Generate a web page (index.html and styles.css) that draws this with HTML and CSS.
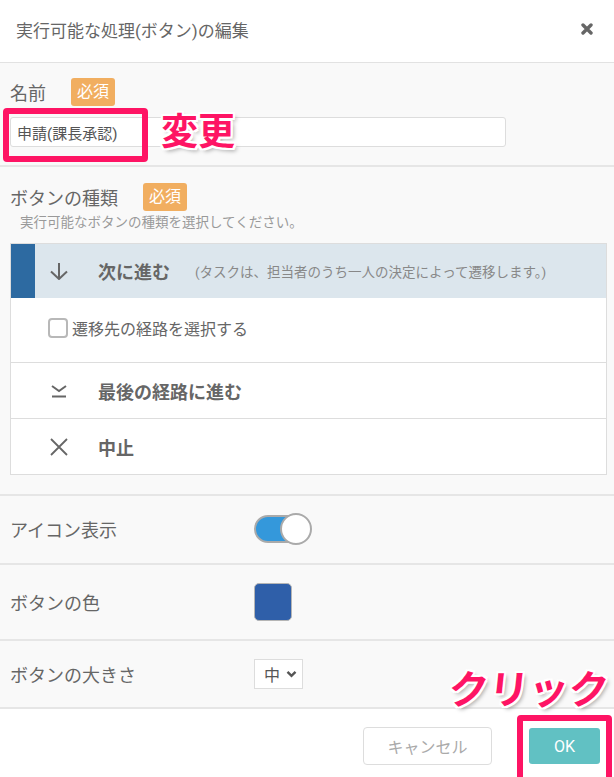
FILE: index.html
```html
<!DOCTYPE html>
<html lang="ja">
<head>
    <meta charset="utf-8" />
    <title>実行可能な処理(ボタン)の編集</title>
    <meta name="viewport" content="width=device-width, initial-scale=1" />
    <link rel="stylesheet" href="styles.css">
</head>
<body>
<div class="modal">
    <div class="modal-header">
        <h1 class="modal-title">実行可能な処理(ボタン)の編集</h1>
        <svg class="close" width="12" height="12" viewBox="0 0 12 12">
            <path d="M2 2L10 10M10 2L2 10" stroke="#666" stroke-width="3.4" stroke-linecap="round" />
        </svg>
    </div>

    <div class="modal-body">
        <div class="section name-section">
            <div class="field-label">名前<span class="badge">必須</span></div>
            <div class="input-wrap">
                <input type="text" class="text-input" value="申請(課長承認)" />
                <span class="mark mark-input"></span>
                <span class="note note-change">変更</span>
            </div>
        </div>

        <div class="section type-section">
            <div class="field-label">ボタンの種類<span class="badge">必須</span></div>
            <div class="help">実行可能なボタンの種類を選択してください。</div>

            <div class="type-list">
                <div class="type-item selected">
                    <svg class="type-icon" width="22" height="18" viewBox="0 0 22 18">
                        <path d="M11 1V17M3 9.5L11 17L19 9.5" fill="none" stroke="#666" stroke-width="2" />
                    </svg>
                    <span class="type-name">次に進む</span>
                    <span class="type-desc">(タスクは、担当者のうち一人の決定によって遷移します。)</span>
                </div>
                <div class="route-option">
                    <span class="checkbox"></span>
                    <span>遷移先の経路を選択する</span>
                </div>
                <div class="type-item">
                    <svg class="type-icon" width="22" height="14" viewBox="0 0 22 14">
                        <path d="M4 2L11 7L18 2M4 12.5H18" fill="none" stroke="#666" stroke-width="2" />
                    </svg>
                    <span class="type-name">最後の経路に進む</span>
                </div>
                <div class="type-item">
                    <svg class="type-icon" width="22" height="18" viewBox="0 0 22 18">
                        <path d="M3 1L19 17M19 1L3 17" fill="none" stroke="#666" stroke-width="1.8" />
                    </svg>
                    <span class="type-name">中止</span>
                </div>
            </div>
        </div>

        <div class="option-row">
            <div class="option-label">アイコン表示</div>
            <div class="toggle"><span class="knob"></span></div>
        </div>
        <div class="option-row">
            <div class="option-label">ボタンの色</div>
            <div class="swatch"></div>
        </div>
        <div class="option-row">
            <div class="option-label">ボタンの大きさ</div>
            <div class="select">中
                <svg width="11" height="8" viewBox="0 0 11 8">
                    <path d="M1.5 1.8L5.5 5.8L9.5 1.8" fill="none" stroke="#555" stroke-width="2.4" />
                </svg>
            </div>
        </div>
    </div>

    <div class="modal-footer">
        <button class="btn btn-cancel">キャンセル</button>
        <div class="ok-wrap">
            <button class="btn btn-ok">OK</button>
            <span class="mark mark-ok"></span>
            <span class="note note-click">クリック</span>
        </div>
    </div>
</div>
</body>
</html>
```

FILE: styles.css
```css
body {
    margin: 0; padding: 0;
    font-family: "Roboto", "Noto Sans CJK JP", sans-serif;
    color: #666; background-color: #fff;
}
.modal { width: 614px; height: 777px; overflow: hidden; }

.modal-header {
    height: 63px; border-bottom: 1px solid #e2e2e2;
    display: flex; align-items: center; justify-content: space-between;
    padding: 0 21px 4px 16px; box-sizing: border-box; background: #fff;
}
.modal-title { margin: 0; font-size: 17px; font-weight: normal; color: #666; }
.close { display: block; }

.modal-body { background-color: #f9f9f9; }
.section { padding: 15px 7px 0 10px; }
.name-section { padding-bottom: 18px; border-bottom: 2px solid #e6e6e6; }
.type-section { padding-top: 16px; padding-bottom: 19px; }

.field-label {
    display: flex; align-items: center; height: 28px;
    font-size: 18px; color: #666;
}
.badge {
    margin-left: 25px; padding: 0 6px; height: 28px; line-height: 28px;
    background-color: #f1ae60; color: #fff; border-radius: 3px;
    font-size: 16px;
}

.input-wrap { position: relative; margin-top: 11px; width: 496px; }
.text-input {
    display: block; width: 496px; height: 30px; box-sizing: border-box;
    border: 1px solid #ddd; border-radius: 3px; background: #fff;
    padding: 0 6px; font: 15px "Roboto", "Noto Sans CJK JP", sans-serif; color: #555;
}

.mark {
    position: absolute; border: 6px solid #fe1464; border-radius: 4px;
    box-sizing: border-box;
}
.mark-input { left: -7px; top: -9px; width: 145px; height: 54px; }
.note {
    position: absolute; color: #fe1464; font-weight: 700; white-space: nowrap;
    font-family: "Noto Sans CJK JP", sans-serif;
    text-shadow: 0 0 2px #fff, 2px 0 0 #fff, -2px 0 0 #fff, 0 2px 0 #fff, 0 -2px 0 #fff,
        2px 2px 0 #fff, -2px -2px 0 #fff, 2px -2px 0 #fff, -2px 2px 0 #fff,
        3px 3px 4px rgba(0, 0, 0, 0.35);
}
.note-change { left: 151px; top: -14px; font-size: 37px; line-height: 52px; }

.help { margin-top: 2px; padding-left: 10px; font-size: 13.5px; line-height: 18px; color: #999; }

.type-list {
    margin-top: 12px; border: 1px solid #ddd; background: #fff;
}
.type-item {
    display: flex; align-items: center; height: 55px;
    border-top: 1px solid #ddd; padding-left: 37px;
}
.type-item.selected {
    height: 54px; border-top: 0; background-color: #dce6ed;
    box-shadow: inset 24px 0 0 #2d6aa1;
}
.type-icon { display: block; width: 22px; margin-right: 28px; }
.type-name { font-size: 18px; font-weight: 700; color: #666; }
.type-desc { margin-left: 25px; font-size: 13.5px; color: #888; }

.route-option {
    display: flex; align-items: center; height: 64px; padding: 0 0 4px 37px;
    box-sizing: border-box; font-size: 16px; color: #666;
}
.checkbox {
    width: 20px; height: 20px; box-sizing: border-box; margin-right: 4px;
    border: 2px solid #b8b8b8; border-radius: 4px; background: #fff;
}

.option-row {
    display: flex; align-items: center; padding: 17px 0 18px 10px;
    border-top: 2px solid #e6e6e6;
}
.option-row + .option-row { padding: 18px 0 18px 10px; }
.option-label { width: 244px; font-size: 18px; color: #666; }

.toggle {
    position: relative; width: 58px; height: 32px;
}
.toggle::before {
    content: ""; position: absolute; left: 0; top: 2px; width: 50px; height: 28px;
    box-sizing: border-box; border: 2px solid #aaa; border-radius: 14px; background: #3498db;
}
.knob {
    position: absolute; right: 0; top: 0; width: 32px; height: 32px;
    box-sizing: border-box; border: 2px solid #aaa; border-radius: 50%; background: #fff;
}
.swatch {
    width: 38px; height: 38px; box-sizing: border-box;
    border: 1px solid #b5b5b5; border-radius: 5px; background: #2f5fa9;
}
.select {
    display: flex; align-items: center; gap: 6px; width: 49px; height: 30px;
    box-sizing: border-box; padding-left: 9px; border: 1px solid #ddd;
    background: #fff; font-size: 16px; color: #555;
}

.modal-footer {
    display: flex; justify-content: flex-end; align-items: flex-start;
    padding: 18px 14px 0 0; background: #fff; height: 70px; box-sizing: border-box;
    border-top: 2px solid #e6e6e6;
}
.btn {
    font: 16px "Roboto", "Noto Sans CJK JP", sans-serif; border-radius: 4px; cursor: pointer;
}
.btn-cancel {
    width: 129px; height: 38px; border: 1px solid #ddd; background: #fff; color: #aaa;
}
.ok-wrap { position: relative; margin-left: 37px; }
.btn-ok {
    display: block; width: 71px; height: 36px; margin-top: 1px; border: 0;
    background: #61c1c3; color: #fff; border-radius: 3px;
}
.mark-ok { left: -12px; top: -12px; width: 95px; height: 70px; }
.note-click { left: -80px; top: -65px; font-size: 40px; line-height: 50px; transform: skewX(-6deg); }
```
